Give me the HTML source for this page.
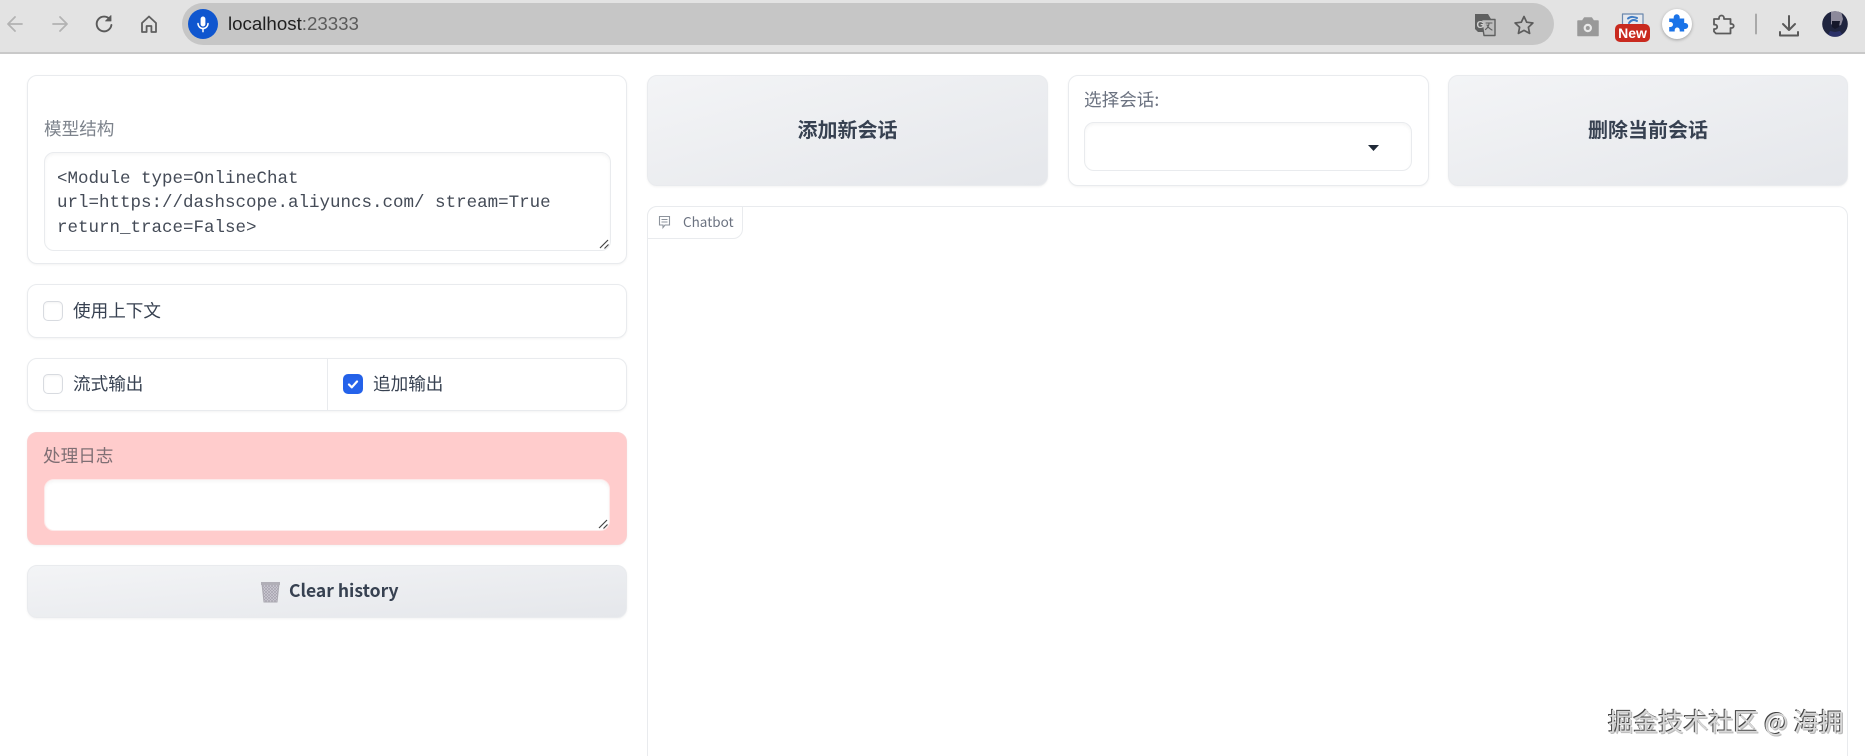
<!DOCTYPE html>
<html lang="zh"><head><meta charset="utf-8"><title>localhost:23333</title>
<style>
html,body{margin:0;padding:0;width:1865px;height:756px;overflow:hidden;background:#fff}
body{position:relative;font-family:"Noto Sans CJK SC","Liberation Sans",sans-serif;color:#374151}
.a{position:absolute;box-sizing:border-box}
.p{position:absolute;box-sizing:border-box;background:#fff;border:1px solid #e9ebee;border-radius:10px;box-shadow:0 1px 2px rgba(0,0,0,.05)}
.t{position:absolute;white-space:nowrap;line-height:1}
.lb{font-size:17.6px;color:#6b7280}
.cb{position:absolute;box-sizing:border-box;width:20px;height:20px;border:1px solid #d8dbe0;border-radius:5px;background:#fff;box-shadow:inset 0 1px 2px rgba(0,0,0,.05)}
.btn{position:absolute;box-sizing:border-box;border:1px solid #e9ebee;border-radius:10px;background:linear-gradient(to bottom right,#f3f4f6,#e5e7eb);box-shadow:0 1px 2px rgba(0,0,0,.05)}
.ta{position:absolute;box-sizing:border-box;background:#fff;border:1px solid #e9ebee;border-radius:10px;box-shadow:inset 0 2px 3px rgba(0,0,0,.04)}
svg{position:absolute;overflow:visible}
</style></head><body>

<!-- browser toolbar -->
<div class="a" style="left:0;top:0;width:1865px;height:54px;background:#e3e3e3;border-bottom:2px solid #c9c9c9"></div>
<svg style="left:0;top:0" width="180" height="50" fill="none" stroke-linecap="round" stroke-linejoin="round">
  <path d="M22 24H8M15 17l-7 7 7 7" stroke="#b3b3b3" stroke-width="1.8"/>
  <path d="M53 24h14M60 17l7 7-7 7" stroke="#b3b3b3" stroke-width="1.8"/>
  <path d="M110 19.5A7.4 7.4 0 1 0 111.4 25" stroke="#5a5a5a" stroke-width="1.9"/>
  <path d="M111 15.5v5.5h-5.5z" fill="#5a5a5a" stroke="#5a5a5a" stroke-width=".8"/>
  <path d="M142 23l7-6.5 7 6.5v9h-4.6v-6h-4.8v6H142z" stroke="#5f5f5f" stroke-width="1.8"/>
</svg>
<div class="a" style="left:182px;top:3px;width:1372px;height:42px;background:#c6c6c6;border-radius:21px"></div>
<div class="a" style="left:188px;top:9px;width:30px;height:30px;background:#0f56cf;border-radius:50%"></div>
<svg style="left:188px;top:9px" width="30" height="30" fill="none" stroke="#fff" stroke-linecap="round">
  <rect x="12.6" y="7.5" width="4.8" height="10" rx="2.4" fill="#fff" stroke="none"/>
  <path d="M10 14.5a5 5 0 0 0 10 0M15 19.6v3" stroke-width="1.5"/>
</svg>
<div class="t" style="left:228px;top:15px;font:18.7px/18px 'Liberation Sans',sans-serif;color:#1f1f1f">localhost<span style="color:#5c5c5c">:23333</span></div>

<svg style="left:1465px;top:5px" width="400" height="42" fill="none" stroke-linejoin="round" stroke-linecap="round">
  <!-- translate -->
  <path d="M10 9h13l3 5v13H13l-3-3z" fill="#5f6060"/>
  <path d="M16.5 14.5H30v16H19z" fill="#bdbdbd" stroke="#5f6060" stroke-width="1.4"/>
  <text x="11.5" y="23" font-family="Liberation Sans" font-size="10" font-weight="700" fill="#d0d0d0">G</text>
  <path d="M21 18h6M24 18c0 3-1.500 5-3.500 6.500M22 20c1 2 3 4 5 5" stroke="#5f6060" stroke-width="1.100"/>
  <!-- star -->
  <path d="M59 11.500l2.700 5.700 6.200.8-4.500 4.300 1.200 6.100-5.600-3-5.600 3 1.200-6.100-4.500-4.300 6.200-.8z" stroke="#5c5c5c" stroke-width="1.700"/>
  <!-- camera -->
  <path d="M113 16h4.500l2-3h7l2 3h4.500v14.500h-20z" fill="#999" stroke="#999" stroke-width="1.500"/>
  <circle cx="122.800" cy="23" r="4.200" fill="#e8e8e8"/>
  <circle cx="122.800" cy="23" r="2" fill="#999"/>
  <!-- extension behind badge -->
  <rect x="157.500" y="9" width="20.500" height="14" fill="#e6e9ee" stroke="#6b88ad" stroke-width="1.200"/>
  <path d="M163 13.500c3-2.500 6-1.500 9-.5M172 16c-3-2-6-1-8 2" stroke="#3f7cc4" stroke-width="2"/>
  <!-- puzzle outline -->
  <path d="M249 14h5v-1a2.500 2.500 0 0 1 5 0v1h6.500v5h1.200a2 2 0 0 1 0 4h-1.200v5.500H251l-2-2V24h1a2.200 2.200 0 0 0 0-4.400h-1z" stroke="#5b5b5b" stroke-width="1.800"/>
  <path d="M291 9.500v19" stroke="#a9a9a9" stroke-width="2"/>
  <!-- download -->
  <path d="M324 11v13M318 19l6 6 6-6M315 27v3.500h18V27" stroke="#5a5a5a" stroke-width="2"/>
</svg>
<div class="a" style="left:1615px;top:24px;width:35px;height:18px;background:#c92a1f;border-radius:5px"></div>
<div class="t" style="left:1615px;top:26px;width:35px;text-align:center;font:700 14px/14px 'Liberation Sans',sans-serif;color:#fff">New</div>
<div class="a" style="left:1662px;top:9px;width:30px;height:30px;background:#fff;border-radius:50%;box-shadow:0 1px 3px rgba(0,0,0,.3)"></div>
<svg style="left:1662px;top:9px" width="30" height="30"><path d="M7 11h4.500V9.800a3 3 0 0 1 6 0V11H22v4.500h1a3 3 0 0 1 0 6h-1V24h-4.500v-1.500a2.500 2.500 0 0 0-5 0V24H7v-4.500h1.300a2.500 2.500 0 0 0 0-5H7z" fill="#1a73e8" transform="translate(.2 -1.500)"/></svg>
<svg style="left:1822px;top:11px" width="26" height="26">
  <defs><clipPath id="av"><circle cx="13" cy="13" r="12.800"/></clipPath></defs>
  <g clip-path="url(#av)"><rect width="26" height="26" fill="#20253f"/>
  <path d="M9 0h10l2 8-2 6-6 2-4-3z" fill="#8d8a9b"/>
  <path d="M10 10h8l-1 6-4 2-3-2z" fill="#15172a"/>
  <path d="M5 26l3-6 5 1 5-1 4 6z" fill="#2b3168"/></g>
</svg>

<!-- left column -->
<div class="p" style="left:27px;top:75px;width:600px;height:189px"></div>
<div class="t lb" style="left:44px;top:120px;color:#7d838c">模型结构</div>
<div class="ta" style="left:44px;top:152px;width:567px;height:99px"></div>
<div class="a" style="left:57px;top:167px;font:17.500px/24.400px 'Liberation Mono',monospace;color:#444b57;white-space:pre">&lt;Module type=OnlineChat
url=https://dashscope.aliyuncs.com/ stream=True
return_trace=False&gt;</div>
<svg style="left:599px;top:239px" width="11" height="11" stroke="#444" stroke-width="1.200"><path d="M1 9L9 1M5.500 9.500L9.500 5.500"/></svg>

<div class="p" style="left:27px;top:284px;width:600px;height:54px"></div>
<div class="cb" style="left:43px;top:301px"></div>
<div class="t" style="left:73px;top:302px;font-size:17.600px;color:#374151">使用上下文</div>

<div class="p" style="left:27px;top:358px;width:600px;height:53px"></div>
<div class="a" style="left:327px;top:359px;width:1px;height:51px;background:#e9ebee"></div>
<div class="cb" style="left:43px;top:374px"></div>
<div class="t" style="left:73px;top:375px;font-size:17.600px;color:#374151">流式输出</div>
<div class="cb" style="left:343px;top:374px;background:#2563eb;border-color:#2563eb"></div>
<svg style="left:343px;top:374px" width="20" height="20" fill="none" stroke="#fff" stroke-width="2.200" stroke-linecap="round" stroke-linejoin="round"><path d="M6 10.500l2.800 2.800L14 7.500"/></svg>
<div class="t" style="left:373px;top:375px;font-size:17.600px;color:#374151">追加输出</div>

<div class="p" style="left:27px;top:432px;width:600px;height:113px;background:#ffcccc;border-color:#fbd0d0"></div>
<div class="t lb" style="left:43px;top:447px;color:#7f6f74">处理日志</div>
<div class="ta" style="left:44px;top:479px;width:566px;height:52px;border-color:#fdeaea"></div>
<svg style="left:598px;top:519px" width="11" height="11" stroke="#444" stroke-width="1.200"><path d="M1 9L9 1M5.500 9.500L9.500 5.500"/></svg>

<div class="btn" style="left:27px;top:565px;width:600px;height:53px"></div>
<svg style="left:260px;top:580px" width="21" height="24">
  <defs><pattern id="h" width="3" height="3" patternUnits="userSpaceOnUse"><rect width="3" height="3" fill="#d2cfd8"/><path d="M0 0l3 3M3 0l-3 3" stroke="#a5a2ad" stroke-width=".7"/></pattern></defs>
  <path d="M2 4h17l-2 18H4z" fill="url(#h)" stroke="#aaa8b0"/>
  <rect x="1" y="2" width="19" height="3" fill="#b1afb7"/>
</svg>
<div class="t" style="left:289px;top:582px;font-size:17.500px;font-weight:600;color:#374151">Clear history</div>

<!-- right column -->
<div class="btn" style="left:647px;top:75px;width:401px;height:111px"></div>
<div class="t" style="left:647px;top:119px;width:401px;text-align:center;font-size:20px;font-weight:700;color:#374151">添加新会话</div>
<div class="p" style="left:1068px;top:75px;width:361px;height:111px"></div>
<div class="t lb" style="left:1084px;top:91px;color:#6b7280">选择会话:</div>
<div class="ta" style="left:1084px;top:122px;width:328px;height:49px"></div>
<svg style="left:1367px;top:144px" width="14" height="8"><path d="M1 1h11L6.500 7z" fill="#1f2937"/></svg>
<div class="btn" style="left:1448px;top:75px;width:400px;height:111px"></div>
<div class="t" style="left:1448px;top:119px;width:400px;text-align:center;font-size:20px;font-weight:700;color:#374151">删除当前会话</div>

<div class="a" style="left:647px;top:206px;width:1201px;height:550px;background:#fff;border:1px solid #e9ebee;border-bottom:0;border-radius:10px 10px 0 0"></div>
<div class="a" style="left:647px;top:206px;width:96px;height:33px;background:#fff;border:1px solid #e9ebee;border-radius:10px 0 10px 0"></div>
<svg style="left:658px;top:215px" width="14" height="15" fill="none" stroke="#8d939c" stroke-width="1.100"><path d="M1.500 1.500h10v8.500H7l-2 2.500V10H1.500zM3.500 4.500h6M3.500 7h6"/></svg>
<div class="t" style="left:683px;top:215px;font-size:13.500px;color:#6b7280">Chatbot</div>

<!-- watermark -->
<div class="t" style="left:1608px;top:708px;font:25.100px/27px 'Noto Sans CJK SC','Liberation Sans',sans-serif;color:#d8d8d8;text-shadow:-1px -1px 0 #444,1px 1px 0 #bbb">掘金技术社区 @ 海拥</div>
</body></html>
